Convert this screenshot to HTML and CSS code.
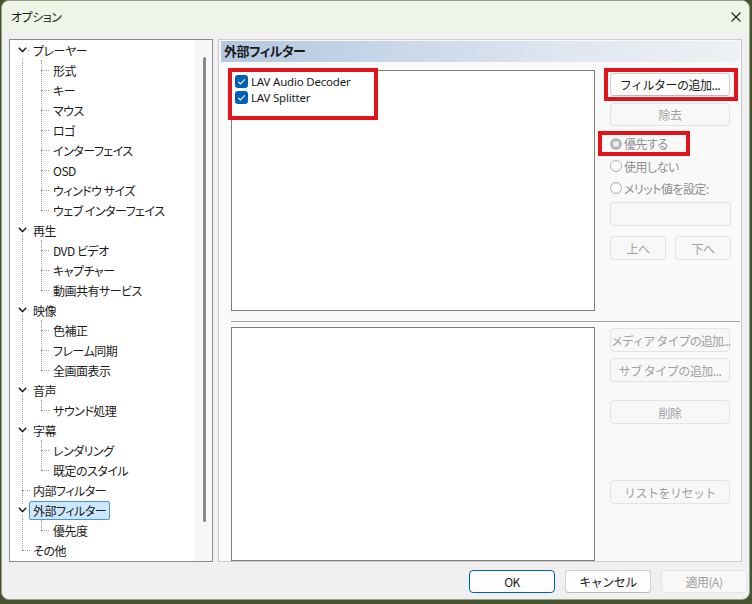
FILE: index.html
```html
<!DOCTYPE html>
<html lang="ja">
<head>
  <meta charset="UTF-8">
  <title>オプション</title>
  <link rel="stylesheet" href="styles.css">
</head>
<body>
  <div class="window">
    <div class="titlebar">
      <span class="title">オプション</span>
      <svg class="close" width="10" height="10" viewBox="0 0 10 10">
        <path d="M0.5 0.5 L9.5 9.5 M9.5 0.5 L0.5 9.5" stroke="#1c1c1c" stroke-width="1.1" fill="none"/>
      </svg>
    </div>

    <div class="content">
      <!-- page tree -->
      <div class="tree">
        <div class="tree-list">
          <ul class="tree-root">
            <li>
              <div class="row open"><span class="twisty"><svg width="9" height="6" viewBox="0 0 9 6"><path d="M0.8 0.8 L4.5 4.6 L8.2 0.8" stroke="#222" stroke-width="1.5" fill="none"/></svg></span><span class="label">プレーヤー</span></div>
              <ul class="tree-sub">
                <li><div class="row"><span class="label">形式</span></div></li>
                <li><div class="row"><span class="label">キー</span></div></li>
                <li><div class="row"><span class="label">マウス</span></div></li>
                <li><div class="row"><span class="label">ロゴ</span></div></li>
                <li><div class="row"><span class="label">インターフェイス</span></div></li>
                <li><div class="row"><span class="label">OSD</span></div></li>
                <li><div class="row"><span class="label">ウィンドウ サイズ</span></div></li>
                <li><div class="row"><span class="label">ウェブ インターフェイス</span></div></li>
              </ul>
            </li>
            <li>
              <div class="row open"><span class="twisty"><svg width="9" height="6" viewBox="0 0 9 6"><path d="M0.8 0.8 L4.5 4.6 L8.2 0.8" stroke="#222" stroke-width="1.5" fill="none"/></svg></span><span class="label">再生</span></div>
              <ul class="tree-sub">
                <li><div class="row"><span class="label">DVD ビデオ</span></div></li>
                <li><div class="row"><span class="label">キャプチャー</span></div></li>
                <li><div class="row"><span class="label">動画共有サービス</span></div></li>
              </ul>
            </li>
            <li>
              <div class="row open"><span class="twisty"><svg width="9" height="6" viewBox="0 0 9 6"><path d="M0.8 0.8 L4.5 4.6 L8.2 0.8" stroke="#222" stroke-width="1.5" fill="none"/></svg></span><span class="label">映像</span></div>
              <ul class="tree-sub">
                <li><div class="row"><span class="label">色補正</span></div></li>
                <li><div class="row"><span class="label">フレーム同期</span></div></li>
                <li><div class="row"><span class="label">全画面表示</span></div></li>
              </ul>
            </li>
            <li>
              <div class="row open"><span class="twisty"><svg width="9" height="6" viewBox="0 0 9 6"><path d="M0.8 0.8 L4.5 4.6 L8.2 0.8" stroke="#222" stroke-width="1.5" fill="none"/></svg></span><span class="label">音声</span></div>
              <ul class="tree-sub">
                <li><div class="row"><span class="label">サウンド処理</span></div></li>
              </ul>
            </li>
            <li>
              <div class="row open"><span class="twisty"><svg width="9" height="6" viewBox="0 0 9 6"><path d="M0.8 0.8 L4.5 4.6 L8.2 0.8" stroke="#222" stroke-width="1.5" fill="none"/></svg></span><span class="label">字幕</span></div>
              <ul class="tree-sub">
                <li><div class="row"><span class="label">レンダリング</span></div></li>
                <li><div class="row"><span class="label">既定のスタイル</span></div></li>
              </ul>
            </li>
            <li><div class="row leaf"><span class="label">内部フィルター</span></div></li>
            <li>
              <div class="row open"><span class="twisty"><svg width="9" height="6" viewBox="0 0 9 6"><path d="M0.8 0.8 L4.5 4.6 L8.2 0.8" stroke="#222" stroke-width="1.5" fill="none"/></svg></span><span class="label selected">外部フィルター</span></div>
              <ul class="tree-sub">
                <li><div class="row"><span class="label">優先度</span></div></li>
              </ul>
            </li>
            <li><div class="row leaf"><span class="label">その他</span></div></li>
          </ul>
        </div>
        <div class="tree-scroll"><div class="thumb"></div></div>
      </div>

      <!-- external filters page -->
      <div class="panel">
        <div class="panel-head">外部フィルター</div>
        <div class="panel-body">
          <div class="section upper">
            <div class="listbox filters">
              <div class="check-row">
                <svg width="13" height="13" viewBox="0 0 13 13"><rect x="0" y="0" width="13" height="13" rx="3" fill="#005fb8"/><path d="M3.2 6.8 L5.4 9 L9.8 4.4" stroke="#fff" stroke-width="1.1" fill="none"/></svg>
                <span>LAV Audio Decoder</span>
              </div>
              <div class="check-row">
                <svg width="13" height="13" viewBox="0 0 13 13"><rect x="0" y="0" width="13" height="13" rx="3" fill="#005fb8"/><path d="M3.2 6.8 L5.4 9 L9.8 4.4" stroke="#fff" stroke-width="1.1" fill="none"/></svg>
                <span>LAV Splitter</span>
              </div>
              <div class="mark mark-list"></div>
            </div>
            <div class="side">
              <div class="marked">
                <button class="btn add">フィルターの追加...</button>
                <div class="mark mark-add"></div>
              </div>
              <button class="btn remove" disabled>除去</button>
              <div class="radios">
                <div class="radio marked">
                  <svg width="12" height="12" viewBox="0 0 12 12"><circle cx="6" cy="6" r="6" fill="#b9b9b9"/><circle cx="6" cy="6" r="3" fill="#ededed"/></svg>
                  <span>優先する</span>
                  <div class="mark mark-radio"></div>
                </div>
                <div class="radio">
                  <svg width="12" height="12" viewBox="0 0 12 12"><circle cx="6" cy="6" r="5.5" fill="#fdfdfd" stroke="#b0b0b0"/></svg>
                  <span>使用しない</span>
                </div>
                <div class="radio">
                  <svg width="12" height="12" viewBox="0 0 12 12"><circle cx="6" cy="6" r="5.5" fill="#fdfdfd" stroke="#b0b0b0"/></svg>
                  <span>メリット値を設定:</span>
                </div>
              </div>
              <div class="field"></div>
              <div class="pair">
                <button class="btn" disabled>上へ</button>
                <button class="btn" disabled>下へ</button>
              </div>
            </div>
          </div>

          <div class="divider"></div>

          <div class="section lower">
            <div class="listbox types"></div>
            <div class="side">
              <button class="btn tight" disabled>メディア タイプの追加...</button>
              <button class="btn" disabled>サブ タイプの追加...</button>
              <button class="btn gap-del" disabled>削除</button>
              <button class="btn gap-reset" disabled>リストをリセット</button>
            </div>
          </div>
        </div>
      </div>
    </div>

    <div class="footer">
      <button class="btn dlg default">OK</button>
      <button class="btn dlg">キャンセル</button>
      <button class="btn dlg" disabled>適用(A)</button>
    </div>
  </div>
</body>
</html>
```

FILE: styles.css
```css
body {
  margin: 0;
  background-color: #45532f;
  font-family: "Noto Sans CJK JP", sans-serif;
  font-feature-settings: "palt";
  font-size: 12px;
  letter-spacing: -0.5px;
  color: #1a1a1a;
}
.window {
  width: 749px;
  height: 600px;
  margin-left: 1px;
  box-sizing: border-box;
  border: 1px solid #9aa08e;
  border-radius: 8px;
  overflow: hidden;
  background-color: #f0f0f0;
  display: flex;
  flex-direction: column;
}
.titlebar {
  height: 31px;
  flex: none;
  background-color: #eef4e6;
  display: flex;
  align-items: center;
  justify-content: space-between;
  padding: 0 8px 0 9px;
}
.content {
  display: flex;
  gap: 5px;
  padding: 7px 0 0 7px;
  height: 523px;
  flex: none;
}

/* tree */
.tree {
  width: 204px;
  flex: none;
  box-sizing: border-box;
  border: 1px solid #8c8c8c;
  background-color: #fff;
  display: flex;
  overflow: hidden;
}
.tree-list {
  flex: 1;
  overflow: hidden;
}
.tree-scroll {
  width: 17px;
  background-color: #f7f7f7;
  display: flex;
  justify-content: center;
  padding-top: 17px;
}
.thumb {
  width: 3px;
  height: 465px;
  border-radius: 2px;
  background-color: #8a8a8a;
  margin-left: 1px;
}
.tree ul {
  list-style: none;
  margin: 0;
  padding: 0;
  position: relative;
}
.tree-root::before {
  content: '';
  position: absolute;
  left: 12px;
  top: 19px;
  bottom: 10px;
  border-left: 1px dotted #9a9a9a;
}
.tree-sub::before {
  content: '';
  position: absolute;
  left: 31px;
  top: 0;
  bottom: 10px;
  border-left: 1px dotted #9a9a9a;
}
.row {
  height: 20px;
  display: flex;
  align-items: center;
  position: relative;
  padding-left: 20px;
  white-space: nowrap;
}
.tree-sub .row {
  padding-left: 40px;
}
.tree-sub .row::before,
.row.leaf::before {
  content: '';
  position: absolute;
  top: 10px;
  left: 31px;
  width: 8px;
  border-top: 1px dotted #9a9a9a;
}
.row.leaf::before {
  left: 12px;
}
.row.open::after {
  content: '';
  position: absolute;
  top: 10px;
  left: 18px;
  width: 1px;
  height: 1px;
  background-color: #9a9a9a;
}
.twisty {
  position: absolute;
  left: 7px;
  top: 5px;
  width: 11px;
  height: 10px;
  background-color: #fff;
  display: flex;
  align-items: center;
  justify-content: center;
}
.label {
  padding: 0 3px;
  line-height: 17px;
  border: 1px solid transparent;
  margin-left: -1px;
}
.label.selected {
  background-color: #cce8ff;
  border-color: #4d94d6;
  border-radius: 2px;
}

/* right page */
.panel {
  width: 524px;
  flex: none;
  box-sizing: border-box;
  border: 1px solid #cbcbcb;
  background-color: #f9f9f9;
  padding: 1px 1px 0 2px;
  display: flex;
  flex-direction: column;
}
.panel-head {
  height: 21px;
  line-height: 20px;
  padding-left: 3px;
  font-size: 13px;
  font-weight: bold;
  background: linear-gradient(to right, #b3c7e0, #e1e8f1 70%, #eef1f5);
}
.panel-body {
  flex: 1;
  display: flex;
  flex-direction: column;
  padding: 8px 0 0 10px;
}
.section {
  display: flex;
  gap: 15px;
}
.section.lower {
  flex: 1;
  margin-top: 5px;
}
.listbox {
  width: 364px;
  flex: none;
  box-sizing: border-box;
  border: 1px solid #7e7e7e;
  background-color: #fff;
  position: relative;
}
.listbox.filters {
  height: 241px;
  padding: 2px 0 0 3px;
}
.divider {
  margin-top: 10px;
  border-top: 1px solid #a3a3a3;
}
.check-row {
  display: flex;
  align-items: center;
  gap: 3px;
  height: 16px;
  font-family: "Noto Sans", sans-serif;
  font-size: 11.5px;
  letter-spacing: -0.2px;
}
.side {
  width: 121px;
  flex: none;
  display: flex;
  flex-direction: column;
}
.upper .side {
  padding-top: 3px;
}
.lower .side {
  padding-top: 1px;
}
.btn {
  font-family: inherit;
  font-size: 12px;
  letter-spacing: -0.5px;
  height: 23px;
  box-sizing: border-box;
  background-color: #fdfdfd;
  border: 1px solid #d0d0d0;
  border-bottom-color: #b8b8b8;
  border-radius: 4px;
  color: #1a1a1a;
  padding: 0;
  width: 120px;
  white-space: nowrap;
}
.btn.tight {
  letter-spacing: -0.9px;
}
.btn:disabled {
  background-color: #f8f8f8;
  border-color: #e3e3e3;
  color: #a0a0a0;
}
.btn.remove {
  margin-top: 7px;
}
.lower .btn {
  height: 24px;
}
.lower .btn + .btn {
  margin-top: 6px;
}
.lower .btn.gap-del {
  margin-top: 18px;
}
.lower .btn.gap-reset {
  margin-top: 56px;
}
.marked {
  position: relative;
}
.mark {
  position: absolute;
  border: 4px solid #e3131c;
  box-sizing: border-box;
}
.mark-list {
  left: -4px;
  top: -3px;
  width: 150px;
  height: 52px;
}
.mark-add {
  left: -6px;
  top: -5px;
  width: 134px;
  height: 33px;
}
.mark-radio {
  left: -12px;
  top: 0;
  width: 92px;
  height: 25px;
}
.radios {
  margin-top: 5px;
  display: flex;
  flex-direction: column;
}
.radio {
  height: 22px;
  display: flex;
  align-items: center;
  gap: 2px;
  color: #8f8f8f;
}
.radio:first-child {
  height: 25px;
  margin-bottom: -1px;
}
.field {
  margin-top: 3px;
  height: 24px;
  box-sizing: border-box;
  border: 1px solid #e3e3e3;
  border-radius: 3px;
  background-color: #f8f8f8;
}
.pair {
  display: flex;
  justify-content: space-between;
  margin-top: 10px;
}
.pair .btn {
  width: 56px;
  height: 24px;
}

/* dialog buttons */
.footer {
  display: flex;
  justify-content: flex-end;
  gap: 10px;
  padding: 8px 2px 0 0;
}
.btn.dlg {
  width: 86px;
  height: 23px;
}
.btn.default {
  border: 1px solid #005fb8;
  border-radius: 4px;
}
```
